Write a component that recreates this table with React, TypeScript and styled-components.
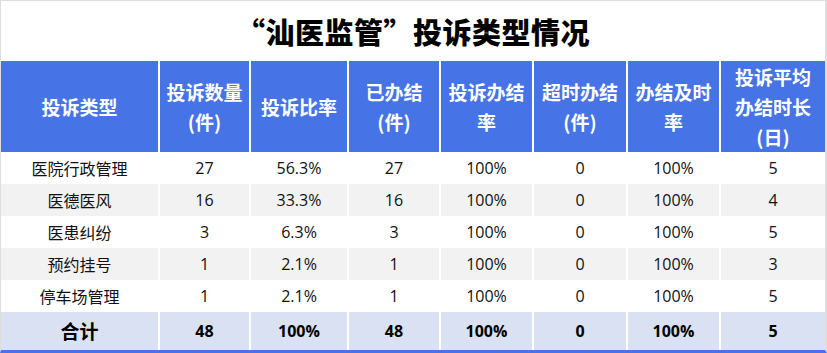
import React from 'react'
import styled, { createGlobalStyle } from 'styled-components'

const GlobalStyle = createGlobalStyle`
  html, body {
    margin: 0;
    padding: 0;
    background: #fff;
  }
`

const COLUMNS = '157px 89px 96px 90px 91px 92px 91px 1fr'

const Frame = styled.div`
  box-sizing: border-box;
  width: 827px;
  height: 353px;
  border-top: 1px solid #dedede;
  border-left: 1px solid #dedede;
  border-right: 2px solid #dedede;
  border-bottom: 3px solid #4673e6;
  background: #fff;
  display: flex;
  flex-direction: column;
  font-family: "Open Sans", "Noto Sans CJK SC", sans-serif;
`

const Title = styled.h1`
  margin: 0;
  height: 60px;
  display: flex;
  align-items: center;
  justify-content: center;
  font-family: "Noto Sans CJK SC", sans-serif;
  font-size: 29px;
  font-weight: 900;
  color: #000;
  letter-spacing: 0.5px;
`

const Row = styled.div<{ $height: number }>`
  display: grid;
  grid-template-columns: ${COLUMNS};
  column-gap: 2px;
  height: ${({ $height }) => $height}px;
`

type Tone = 'head' | 'white' | 'gray' | 'total'

const backgrounds: Record<Tone, string> = {
  head: '#4673e6',
  white: '#ffffff',
  gray: '#f2f2f2',
  total: '#d9e1f2',
}

const Cell = styled.div<{ $tone: Tone }>`
  display: flex;
  align-items: center;
  justify-content: center;
  text-align: center;
  background: ${({ $tone }) => backgrounds[$tone]};
  color: ${({ $tone }) => ($tone === 'head' ? '#fff' : '#111')};
  font-size: 16px;
  white-space: nowrap;
`

const HeadLabel = styled.span`
  font-family: "Noto Sans CJK SC", sans-serif;
  font-size: 19px;
  font-weight: 700;
  line-height: 30px;
`

const TotalLabel = styled.span<{ $big?: boolean }>`
  font-weight: 700;
  font-size: ${({ $big }) => ($big ? '19px' : '16px')};
  color: #000;
`

const headers = [
  ['投诉类型'],
  ['投诉数量', '(件)'],
  ['投诉比率'],
  ['已办结', '(件)'],
  ['投诉办结', '率'],
  ['超时办结', '(件)'],
  ['办结及时', '率'],
  ['投诉平均', '办结时长', '(日)'],
]

const rows = [
  ['医院行政管理', '27', '56.3%', '27', '100%', '0', '100%', '5'],
  ['医德医风', '16', '33.3%', '16', '100%', '0', '100%', '4'],
  ['医患纠纷', '3', '6.3%', '3', '100%', '0', '100%', '5'],
  ['预约挂号', '1', '2.1%', '1', '100%', '0', '100%', '3'],
  ['停车场管理', '1', '2.1%', '1', '100%', '0', '100%', '5'],
]

const total = ['合计', '48', '100%', '48', '100%', '0', '100%', '5']

export default function App() {
  return (
    <>
      <GlobalStyle />
      <Frame>
        <Title>“汕医监管”投诉类型情况</Title>

        <Row $height={91}>
          {headers.map((lines, i) => (
            <Cell key={i} $tone="head">
              <HeadLabel>
                {lines.map((line, j) => (
                  <React.Fragment key={j}>
                    {j > 0 && <br />}
                    {line}
                  </React.Fragment>
                ))}
              </HeadLabel>
            </Cell>
          ))}
        </Row>

        {rows.map((row, r) => (
          <Row key={r} $height={32}>
            {row.map((value, c) => (
              <Cell key={c} $tone={r % 2 ? 'gray' : 'white'}>
                {value}
              </Cell>
            ))}
          </Row>
        ))}

        <Row $height={38}>
          {total.map((value, c) => (
            <Cell key={c} $tone="total">
              <TotalLabel $big={c === 0}>{value}</TotalLabel>
            </Cell>
          ))}
        </Row>
      </Frame>
    </>
  )
}
